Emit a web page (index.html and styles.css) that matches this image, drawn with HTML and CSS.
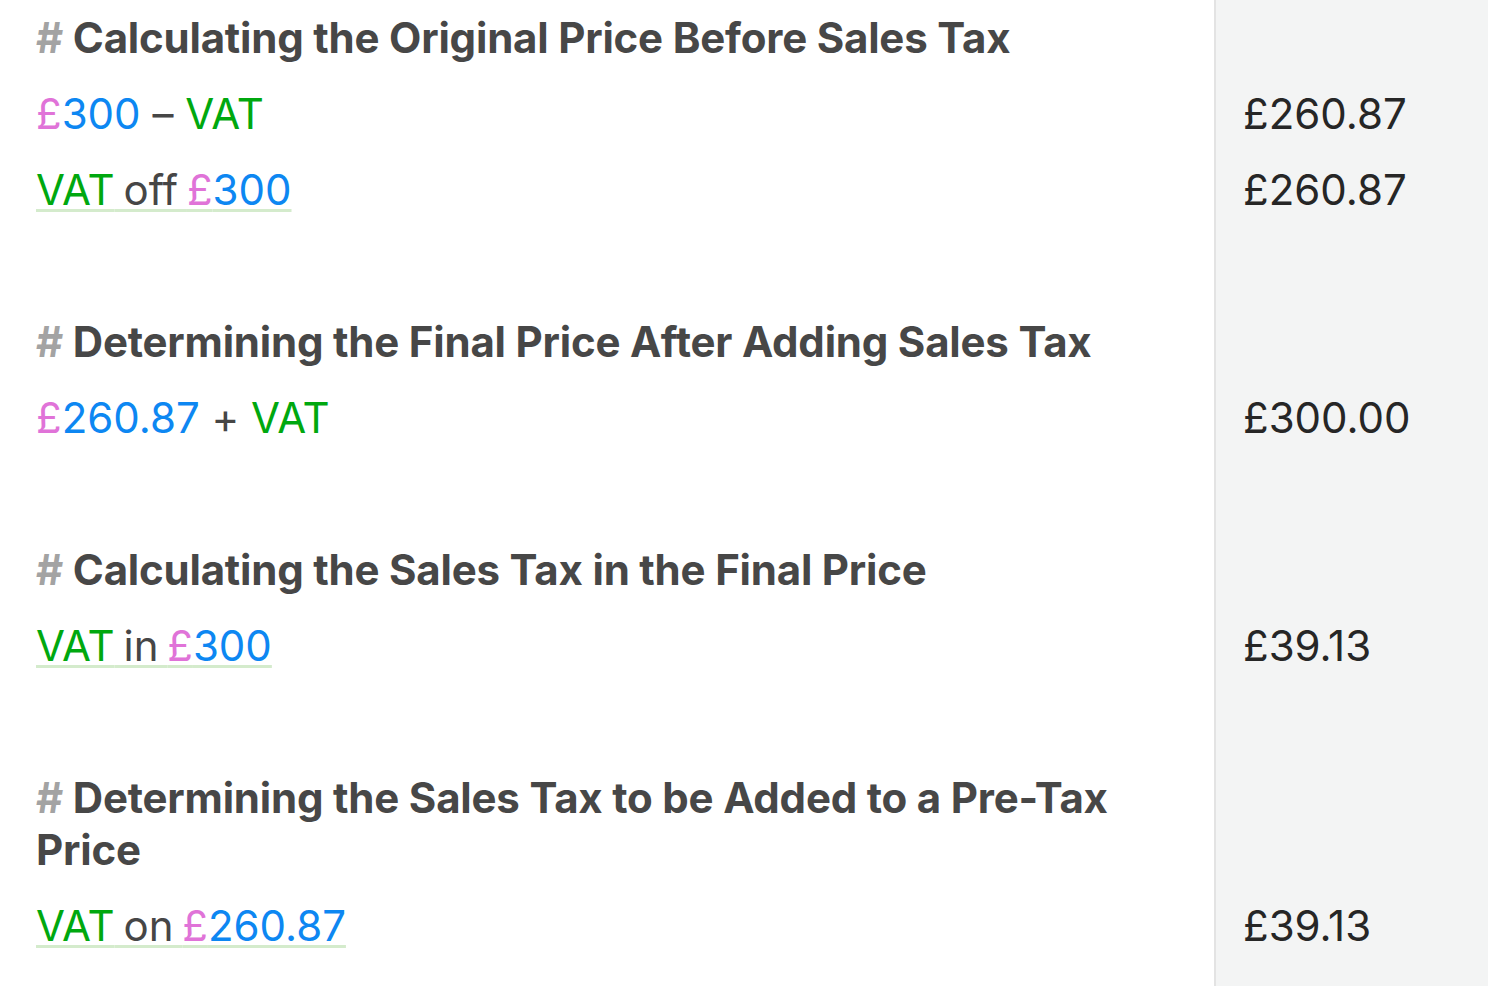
FILE: index.html
```html
<!DOCTYPE html>
<html lang="en">
<head>
<meta charset="utf-8">
<title>VAT</title>
<link rel="stylesheet" href="styles.css">
</head>
<body>
<div class="sheet">
  <div class="editor">
    <div class="line"><span class="heading"><span class="hash">#</span> Calculating the Original Price Before Sales Tax</span></div>
    <div class="line"><span class="cur">£</span><span class="num">300</span> <span class="op">–</span> <span class="var">VAT</span></div>
    <div class="line"><span class="ul"><span class="var">VAT</span> off <span class="cur">£</span><span class="num">300</span></span></div>
    <div class="line"></div>
    <div class="line"><span class="heading"><span class="hash">#</span> Determining the Final Price After Adding Sales Tax</span></div>
    <div class="line"><span class="cur">£</span><span class="num">260.87</span> <span class="op">+</span> <span class="var">VAT</span></div>
    <div class="line"></div>
    <div class="line"><span class="heading"><span class="hash">#</span> Calculating the Sales Tax in the Final Price</span></div>
    <div class="line"><span class="ul"><span class="var">VAT</span> in <span class="cur">£</span><span class="num">300</span></span></div>
    <div class="line"></div>
    <div class="line"><span class="heading"><span class="hash">#</span> Determining the Sales Tax to be Added to a Pre-Tax Price</span></div>
    <div class="line"><span class="ul"><span class="var">VAT</span> on <span class="cur">£</span><span class="num">260.87</span></span></div>
  </div>
  <div class="results">
    <div class="line"></div>
    <div class="line">£260.87</div>
    <div class="line">£260.87</div>
    <div class="line"></div>
    <div class="line"></div>
    <div class="line">£300.00</div>
    <div class="line"></div>
    <div class="line"></div>
    <div class="line">£39.13</div>
    <div class="line"></div>
    <div class="line tall"></div>
    <div class="line">£39.13</div>
  </div>
</div>
</body>
</html>
```

FILE: styles.css
```css
html, body {
  margin: 0;
  padding: 0;
  height: 100%;
}
body {
  background: #ffffff;
  font-family: Inter, "Noto Sans", sans-serif;
  font-size: 42px;
  color: #464646;
}
.sheet {
  display: flex;
  min-height: 100%;
}
.editor {
  width: 1214px;
  padding: 0 50px 0 36px;
  box-sizing: border-box;
  word-spacing: -3px;
}
.results {
  flex: 1;
  background: #f3f4f4;
  border-left: 2px solid #e3e3e3;
  padding-left: 27px;
  color: #262626;
}
.line {
  line-height: 52px;
  min-height: 52px;
  padding: 12px 0;
}
.line.tall {
  min-height: 104px;
}
.heading {
  font-weight: 700;
  color: #474747;
  letter-spacing: -0.2px;
  word-spacing: 0;
}
.hash {
  color: #a3a3a3;
}
.op {
  margin: 0 3px;
}
.cur { color: #e073d8; }
.num { color: #0d87f2; }
.var { color: #00a80f; }
.ul {
  text-decoration: underline;
  text-decoration-color: #d4ebcc;
  text-decoration-thickness: 3px;
  text-underline-offset: 4px;
  text-decoration-skip-ink: none;
}
```
